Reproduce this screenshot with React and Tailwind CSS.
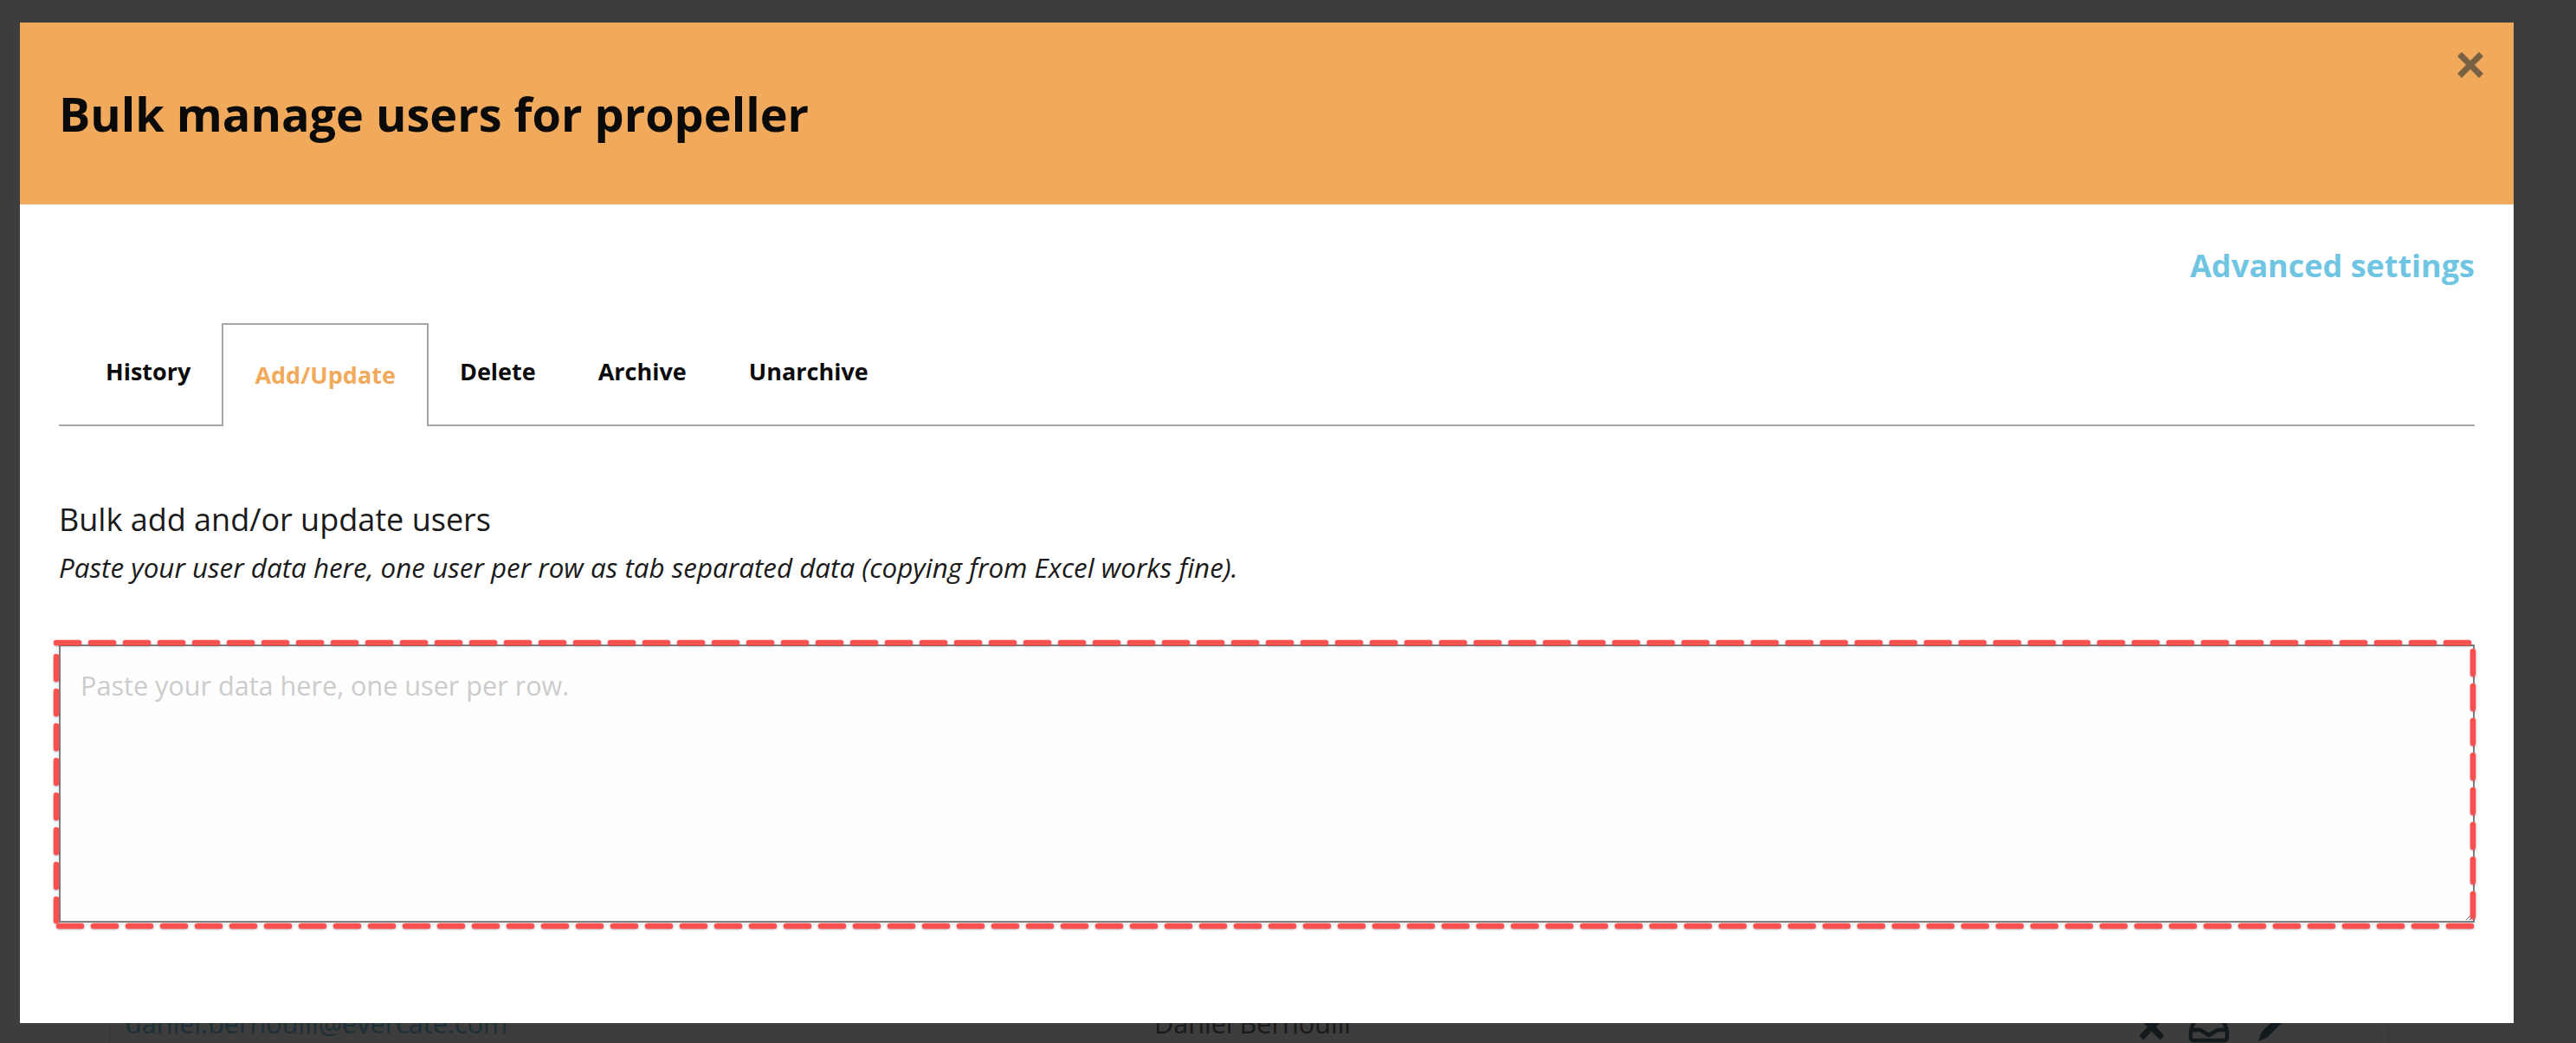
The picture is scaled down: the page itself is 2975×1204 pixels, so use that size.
import React from "react";

const tabs = ["History", "Add/Update", "Delete", "Archive", "Unarchive"];

// red dashed highlight drawn over the textarea
const Highlight = () => (
  <svg className="pointer-events-none absolute left-[-7px] top-[-6px] h-[336px] w-[2800px] drop-shadow-[0_1px_1px_rgba(0,0,0,0.25)]" viewBox="0 0 2800 336" fill="none">
    <g stroke="#ff5050" strokeWidth="6.5" strokeLinecap="round" strokeDasharray="26 14">
      <line x1="4" y1="4" x2="2794" y2="4" />
      <line x1="4" y1="20" x2="4" y2="325" />
      <line x1="2795" y1="14" x2="2795" y2="320" />
      <line x1="7" y1="331" x2="2794" y2="331" />
    </g>
  </svg>
);

// table row of the page behind the overlay, only the bottom edge shows
const BackgroundRow = () => (
  <>
    <div className="absolute left-[127px] top-[1181px] h-[23px] w-[1px] bg-[#383838]" />
    <div className="absolute left-[2758px] top-[1181px] h-[23px] w-[1px] bg-[#383838]" />
    <div className="absolute left-[145px] top-[1153px] text-[30.6px] leading-[56px] text-[#1c2f38]">daniel.bernoulli@evercate.com</div>
    <div className="absolute left-[1333px] top-[1153px] text-[30.6px] leading-[56px] text-[#1a1a1a]">Daniel Bernoulli</div>
    <svg className="absolute left-[2465px] top-[1165px] h-[39px] w-[180px] text-[#131a1d]" viewBox="0 0 180 39" fill="none" stroke="currentColor">
      <path d="M8 8 L32 33 M32 8 L8 33" strokeWidth="7" />
      <path d="M65 24 V33 a3 3 0 0 0 3 3 H104 a3 3 0 0 0 3 -3 V24 M65 24 L71 10 H101 L107 24 M65 24 H76 L86 30 L96 24 H107" strokeWidth="4.5" strokeLinejoin="round" />
      <path d="M143 37 L147 26 L172 2 L178 8 L153 33 Z" fill="currentColor" stroke="none" />
    </svg>
  </>
);

const App = () => {
  return (
    <div className="relative h-[1204px] w-[2975px] overflow-hidden bg-[#3d3d3d] font-['Open_Sans',sans-serif]">
      <BackgroundRow />

      <div className="absolute left-[23px] top-[26px] flex h-[1155px] w-[2880px] flex-col bg-white">
        <div className="relative flex h-[210px] items-center bg-[#f1aa5c] pl-[45px]">
          <h1 className="text-[54px] font-bold leading-none text-[#0a0a0a]">Bulk manage users for propeller</h1>
          <svg className="absolute right-[35px] top-[34px] h-[30px] w-[30px] text-[#786042]" viewBox="0 0 30 30" fill="none" stroke="currentColor">
            <path d="M2.5 2.5 L27.5 27.5 M27.5 2.5 L2.5 27.5" strokeWidth="7" />
          </svg>
        </div>

        <div className="flex flex-1 flex-col px-[45px]">
          <div className="mt-[46px] text-right text-[36px] font-bold leading-[50px] text-[#70c5e3]">Advanced settings</div>

          <div className="mt-[41px] flex h-[119px] items-stretch border-b-2 border-[#a6a6a6] pl-[18px]">
            {tabs.map((t) => (
              t === "Add/Update" ? (
                <div key={t} className="-mb-[2px] flex items-center border-2 border-b-0 border-[#a6a6a6] bg-white px-[36px] pb-[1px] text-[27px] font-bold text-[#f1aa5c]">{t}</div>
              ) : (
                <div key={t} className="flex items-center px-[36px] pb-[4px] text-[27px] font-bold text-[#0a0a0a]">{t}</div>
              )
            ))}
          </div>

          <h2 className="mt-[83px] text-[36px] leading-[50px] text-[#1a1a1a]">Bulk add and/or update users</h2>
          <p className="mt-[9px] text-[31.4px] italic leading-[42px] text-[#1a1a1a]">Paste your user data here, one user per row as tab separated data (copying from Excel works fine).</p>

          <div className="relative mt-[68px] h-[321px]">
            <textarea
              readOnly
              className="block h-[321px] w-full border-2 border-[#808080] bg-[#fefefe] px-[23px] pt-[24px] text-[30.6px] leading-[42px] shadow-[0_2px_8px_rgba(0,0,0,0.1)] outline-none placeholder:text-[#cccccc]"
              placeholder="Paste your data here, one user per row."
            />
            <Highlight />
          </div>
        </div>
      </div>
    </div>
  );
};

export default App;
